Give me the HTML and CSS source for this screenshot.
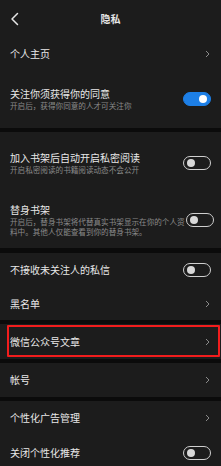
FILE: index.html
```html
<!DOCTYPE html>
<html lang="zh-CN">
<head>
<meta charset="utf-8">
<title>隐私</title>
<link rel="stylesheet" href="styles.css">
</head>
<body>
<div class="page">
  <section class="group">
    <header class="topbar">
      <svg class="back" width="10" height="14" viewBox="0 0 10 14"><polyline points="7.5,1.5 2,7 7.5,12.5" fill="none" stroke="#e6e6e6" stroke-width="1.5" stroke-linecap="round" stroke-linejoin="round"/></svg>
      <div class="title">隐私</div>
    </header>
    <div class="row row-link r-home"><span class="label">个人主页</span><svg class="chev" width="5" height="8" viewBox="0 0 5 8"><polyline points="1,1 4,4 1,7" fill="none" stroke="#8a8a8a" stroke-width="1"/></svg></div>
    <div class="row row-sw r-follow">
      <div class="texts"><div class="label">关注你须获得你的同意</div><div class="sub">开启后，获得你同意的人才可关注你</div></div>
      <span class="toggle on"></span>
    </div>
  </section>
  <section class="group">
    <div class="row row-sw r-private">
      <div class="texts"><div class="label">加入书架后自动开启私密阅读</div><div class="sub">开启私密阅读的书籍阅读动态不会公开</div></div>
      <span class="toggle"></span>
    </div>
    <div class="row row-sw r-stand">
      <div class="texts"><div class="label">替身书架</div><div class="sub wide">开启后，替身书架将代替真实书架显示在你的个人资料中。其他人仅能查看到你的替身书架。</div></div>
      <span class="toggle"></span>
    </div>
  </section>
  <section class="group g3">
    <div class="row row-sw r-msg"><span class="label">不接收未关注人的私信</span><span class="toggle"></span></div>
    <div class="row row-link r-black"><span class="label">黑名单</span><svg class="chev" width="5" height="8" viewBox="0 0 5 8"><polyline points="1,1 4,4 1,7" fill="none" stroke="#8a8a8a" stroke-width="1"/></svg></div>
  </section>
  <section class="group">
    <div class="row row-link r-wechat marked"><span class="label">微信公众号文章</span><svg class="chev" width="5" height="8" viewBox="0 0 5 8"><polyline points="1,1 4,4 1,7" fill="none" stroke="#8a8a8a" stroke-width="1"/></svg></div>
  </section>
  <section class="group">
    <div class="row row-link r-acct"><span class="label">帐号</span><svg class="chev" width="5" height="8" viewBox="0 0 5 8"><polyline points="1,1 4,4 1,7" fill="none" stroke="#8a8a8a" stroke-width="1"/></svg></div>
  </section>
  <section class="group">
    <div class="row row-link r-ad"><span class="label">个性化广告管理</span><svg class="chev" width="5" height="8" viewBox="0 0 5 8"><polyline points="1,1 4,4 1,7" fill="none" stroke="#8a8a8a" stroke-width="1"/></svg></div>
    <div class="row row-sw r-rec"><span class="label">关闭个性化推荐</span><span class="toggle"></span></div>
  </section>
</div>
</body>
</html>
```
FILE: styles.css
```css
* { box-sizing: border-box; margin: 0; padding: 0; }
html, body { background: #0b0b0b; }
body {
  font-family: "Noto Sans CJK SC", "Noto Sans", sans-serif;
  color: #e8e8e8;
  width: 221px;
  height: 466px;
  overflow: hidden;
}
.page { display: flex; flex-direction: column; gap: 4px; }
.g3 { margin-top: 1px; }
.group { background: #1c1c1c; display: flex; flex-direction: column; }
.topbar {
  height: 38px;
  display: flex;
  align-items: center;
  justify-content: center;
  position: relative;
}
.back { position: absolute; left: 10px; top: 12px; }
.title { font-size: 10px; line-height: 12px; font-weight: 700; color: #e6e6e6; }
.row {
  display: flex;
  align-items: center;
  justify-content: space-between;
  padding: 0 10px;
}
.label { font-size: 10px; line-height: 12px; color: #e8e8e8; }
.sub { font-size: 7.6px; line-height: 10px; color: #8a8a8a; margin-top: 1px; }
.sub.wide { width: 176px; }
.chev { margin-right: 1px; }
.r-home { height: 32px; }
.r-follow { height: 58px; }
.r-private { height: 60px; padding-top: 2px; }
.r-stand { height: 56px; }
.r-msg { height: 34px; }
.r-black { height: 33px; }
.r-wechat { height: 35px; position: relative; }
.r-acct { height: 34px; }
.r-ad { height: 34px; }
.r-rec { height: 36px; }
.marked::after {
  content: "";
  position: absolute;
  left: 7px; right: 1px; top: 1px; bottom: 2px;
  border: 2px solid #f21d1d;
  border-radius: 1px;
}
.toggle {
  width: 28px;
  height: 14px;
  border-radius: 7px;
  border: 1px solid #cfcfcf;
  background: #1c1c1c;
  position: relative;
  flex: none;
}
.toggle::after {
  content: "";
  position: absolute;
  width: 8px; height: 8px;
  border-radius: 50%;
  background: #d8d8d8;
  top: 2px; left: 3px;
}
.toggle.on { background: #1d7fe6; border-color: #1d7fe6; }
.toggle.on::after { left: auto; right: 3px; background: #ffffff; }
```
